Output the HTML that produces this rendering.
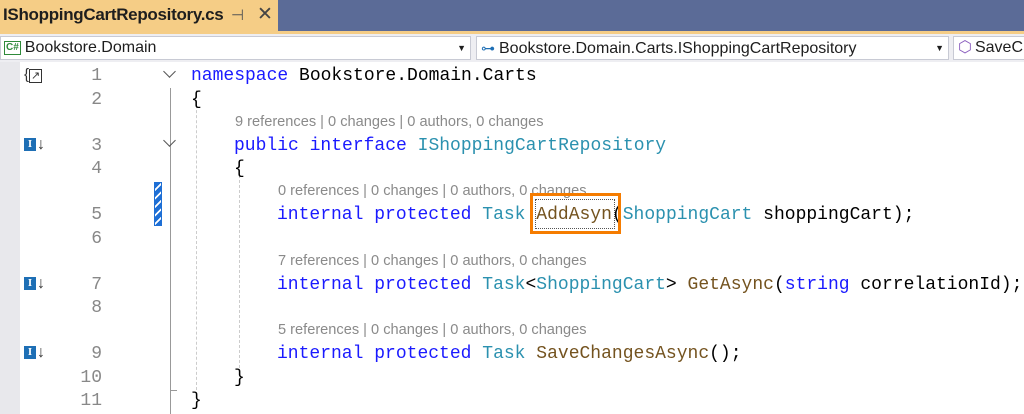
<!DOCTYPE html>
<html><head><meta charset="utf-8"><style>
*{margin:0;padding:0;box-sizing:border-box}
body{width:1024px;height:414px;overflow:hidden;background:#fff;position:relative;font-family:"Liberation Sans",sans-serif}
.a{position:absolute;white-space:pre}
.code{font-family:"Liberation Mono",monospace;font-size:18px;color:#000}
.ln{font-family:"Liberation Mono",monospace;font-size:18px;color:#888;width:60px;text-align:right;left:42px}
.lens{font-size:14.6px;color:#8a8a8a}
.k{color:#1a1aff}.t{color:#2b91af}.m{color:#74531f}
.ib{position:absolute;left:24px;width:26px;height:16px}
.ib span{display:inline-block;width:12px;height:13px;background:#1e6fb5;color:#fff;font:bold 11px "Liberation Serif",serif;text-align:center;line-height:13px;vertical-align:top}
.ib b{font:bold 16px "Liberation Sans",sans-serif;color:#333;line-height:13px;vertical-align:top;margin-left:1px}
.dd{position:absolute;top:36px;height:24px;background:#fff;border:1px solid #c8cad4;font-size:16px;line-height:22px;color:#1e1e1e}
.chev{position:absolute;left:165px;width:9px;height:9px;border-right:1.5px solid #555;border-bottom:1.5px solid #555;transform:rotate(45deg)}
</style></head><body>
<div class="a" style="left:0;top:0;width:1024px;height:31px;background:#5b6b97"></div>
<div class="a" style="left:0;top:0;width:278px;height:31px;background:#f5cd86"></div>
<div class="a" style="left:3px;top:5px;font-size:17px;color:#1e1e1e;font-weight:bold;letter-spacing:-0.3px">IShoppingCartRepository.cs</div>
<div class="a" style="left:231px;top:6px;font-size:15px;color:#555">⊣</div>
<div class="a" style="left:257px;top:3px;font-size:19px;color:#444">✕</div>
<div class="a" style="left:0;top:31px;width:1024px;height:3px;background:#f5cd86"></div>
<div class="a" style="left:0;top:34px;width:1024px;height:28px;background:#eeeef2"></div>
<div class="dd" style="left:0;width:471px"><span style="display:inline-block;margin:0 4px 0 3px;border:1px solid #2f8a3a;color:#2f8a3a;font-size:10px;line-height:12px;padding:0 1px;font-weight:bold;vertical-align:2px">C#</span>Bookstore.Domain<span style="position:absolute;right:4px;font-size:9px">▼</span></div>
<div class="dd" style="left:476px;width:473px"><span style="color:#1e6fb5;margin:0 4px 0 4px;font-size:14px">⊶</span>Bookstore.Domain.Carts.IShoppingCartRepository<span style="position:absolute;right:4px;font-size:9px">▼</span></div>
<div class="dd" style="left:953px;width:80px"><span style="color:#8b5fbf;margin:0 3px 0 4px">⬡</span>SaveC</div>
<div class="a" style="left:0;top:62px;width:20px;height:352px;background:#e8e8ec"></div>
<div class="a" style="left:170px;top:88px;width:1px;height:326px;background:#999"></div>
<div class="a" style="left:170px;top:390px;width:7px;height:1px;background:#999"></div>
<div class="a" style="left:196px;top:90px;width:0;height:300px;border-left:1px dashed #ccc"></div>
<div class="a" style="left:239px;top:160px;width:0;height:208px;border-left:1px dashed #ccc"></div>
<div class="a" style="left:154px;top:182px;width:8px;height:44px;background:repeating-linear-gradient(135deg,#1e6fd5 0 4px,#fff 4px 6px);border:1px solid #1e6fd5"></div>
<div class="a" style="left:24px;top:66px;font-size:15px;color:#333">{<span style="font-size:11px;border:1px solid #333;padding:0 1px;line-height:10px">↗</span></div>
<div class="ib" style="top:138px"><span>I</span><b>↓</b></div>
<div class="ib" style="top:277px"><span>I</span><b>↓</b></div>
<div class="ib" style="top:346px"><span>I</span><b>↓</b></div>
<div class="chev" style="top:67px"></div>
<div class="chev" style="top:136px"></div>
<div class="a ln" style="top:66px">1</div>
<div class="a ln" style="top:90px">2</div>
<div class="a ln" style="top:136px">3</div>
<div class="a ln" style="top:159px">4</div>
<div class="a ln" style="top:205px">5</div>
<div class="a ln" style="top:229px">6</div>
<div class="a ln" style="top:275px">7</div>
<div class="a ln" style="top:298px">8</div>
<div class="a ln" style="top:344px">9</div>
<div class="a ln" style="top:368px">10</div>
<div class="a ln" style="top:391px">11</div>
<div class="a code" style="left:191px;top:66px"><span class="k">namespace</span> Bookstore.Domain.Carts</div>
<div class="a code" style="left:191px;top:90px">{</div>
<div class="a lens" style="left:235px;top:114px">9 references | 0 changes | 0 authors, 0 changes</div>
<div class="a code" style="left:234px;top:136px"><span class="k">public</span> <span class="k">interface</span> <span class="t">IShoppingCartRepository</span></div>
<div class="a code" style="left:234px;top:159px">{</div>
<div class="a lens" style="left:278px;top:183px">0 references | 0 changes | 0 authors, 0 changes</div>
<div class="a code" style="left:277px;top:205px"><span class="k">internal</span> <span class="k">protected</span> <span class="t">Task</span> <span class="m">AddAsyn</span>(<span class="t">ShoppingCart</span> shoppingCart);</div>
<div class="a" style="left:535px;top:199px;width:80px;height:30px;border:1px dotted #555"></div>
<div class="a" style="left:530px;top:193px;width:91px;height:41px;border:3px solid #f57c00"></div>
<div class="a lens" style="left:278px;top:253px">7 references | 0 changes | 0 authors, 0 changes</div>
<div class="a code" style="left:277px;top:275px"><span class="k">internal</span> <span class="k">protected</span> <span class="t">Task</span>&lt;<span class="t">ShoppingCart</span>&gt; <span class="m">GetAsync</span>(<span class="k">string</span> correlationId);</div>
<div class="a lens" style="left:278px;top:322px">5 references | 0 changes | 0 authors, 0 changes</div>
<div class="a code" style="left:277px;top:344px"><span class="k">internal</span> <span class="k">protected</span> <span class="t">Task</span> <span class="m">SaveChangesAsync</span>();</div>
<div class="a code" style="left:234px;top:368px">}</div>
<div class="a code" style="left:191px;top:391px">}</div>
</body></html>
